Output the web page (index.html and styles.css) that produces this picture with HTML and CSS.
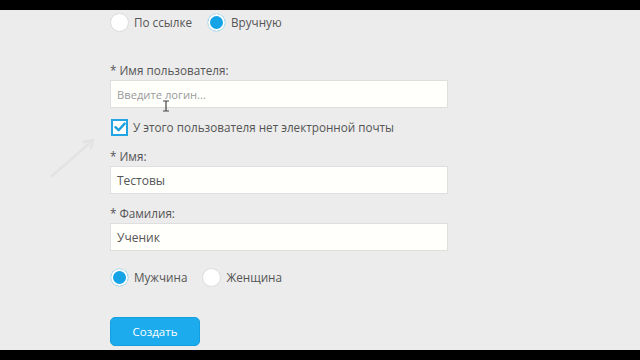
FILE: index.html
```html
<!DOCTYPE html>
<html lang="ru">
<head>
<meta charset="utf-8">
<link rel="stylesheet" href="styles.css">
</head>
<body>
<div class="screen">
  <div class="page">
    <div class="radio-row first">
      <span class="radio"></span><span class="rtext">По ссылке</span>
      <span class="radio on"></span><span class="rtext">Вручную</span>
    </div>

    <div class="label l1">* Имя пользователя:</div>
    <div class="input"><span class="ph">Введите логин...</span></div>

    <div class="check-row">
      <span class="check"><svg width="12" height="12" viewBox="0 0 12 12"><path d="M1.5 6.2 L4.6 9.2 L10.6 2.6" fill="none" stroke="#1a9fdc" stroke-width="2.4" stroke-linecap="round" stroke-linejoin="round"/></svg></span>
      <span class="ctext">У этого пользователя нет электронной почты</span>
    </div>

    <div class="label l2">* Имя:</div>
    <div class="input"><span class="val">Тестовы</span></div>

    <div class="label l3">* Фамилия:</div>
    <div class="input"><span class="val">Ученик</span></div>

    <div class="radio-row second">
      <span class="radio on"></span><span class="rtext">Мужчина</span>
      <span class="radio"></span><span class="rtext">Женщина</span>
    </div>

    <button class="btn">Создать</button>

    <svg class="ibeam" width="8" height="12" viewBox="0 0 8 12"><path d="M1 1 H7 M4 1 V11 M1 11 H7" stroke="#444" stroke-width="1.2" fill="none"/></svg>
    <svg class="trail" width="50" height="45" viewBox="0 0 50 45"><path d="M4 41 L44 6 M36 7 L45 5 L43 13" stroke="#e3e3e3" stroke-width="2.5" fill="none" stroke-linecap="round"/></svg>
  </div>
</div>
</body>
</html>
```
FILE: styles.css
```css
html, body {
  margin: 0;
  padding: 0;
  background: #000;
}
.screen {
  width: 640px;
  height: 360px;
  background: #000;
  padding-top: 10px;
  box-sizing: border-box;
}
.page {
  position: relative;
  height: 340px;
  background: #ececec;
  padding: 2px 0 0 110px;
  box-sizing: border-box;
  font-family: "Open Sans", "Liberation Sans", sans-serif;
  font-size: 11.7px;
  color: #555;
}
.radio-row {
  display: flex;
  align-items: center;
  height: 20px;
}
.radio-row.second {
  margin-top: 16px;
}
.radio {
  width: 19px;
  height: 19px;
  border-radius: 50%;
  background: #fff;
  border: 1px solid #dcdcdc;
  box-sizing: border-box;
  flex: none;
}
.radio.on {
  background: #14a3e6;
  box-shadow: inset 0 0 0 2px #fff;
  border-color: #d6e6ee;
}
.rtext {
  margin: 0 15px 0 5px;
  line-height: 20px;
}
.label {
  line-height: 18px;
  height: 18px;
  margin-bottom: 1px;
}
.l1 { margin-top: 29px; }
.l2 { margin-top: 12px; }
.l3 { margin-top: 10px; }
.input {
  width: 338px;
  height: 28px;
  box-sizing: border-box;
  background: #fffffc;
  border: 1px solid #dedede;
  display: flex;
  align-items: center;
  padding-left: 6px;
  font-size: 12px;
}
.ph { color: #9a9a9a; font-size: 11.2px; }
.val { color: #555; }
.check-row {
  display: flex;
  align-items: center;
  height: 16px;
  margin-top: 11px;
}
.check {
  width: 17px;
  height: 17px;
  margin-left: 1px;
  box-sizing: border-box;
  border: 2px solid #22a5e2;
  background: #fff;
  display: flex;
  align-items: center;
  justify-content: center;
  flex: none;
}
.ctext {
  margin-left: 5px;
  line-height: 18px;
}
.btn {
  display: block;
  margin-top: 30px;
  width: 90px;
  height: 29px;
  border: 1px solid #14a0e0;
  border-radius: 5px;
  background: #1cabec;
  color: #fff;
  font-family: "Open Sans", "Liberation Sans", sans-serif;
  font-size: 11.5px;
  padding: 0;
}
.ibeam {
  position: absolute;
  left: 162px;
  top: 90px;
}
.trail {
  position: absolute;
  left: 48px;
  top: 125px;
}
```
